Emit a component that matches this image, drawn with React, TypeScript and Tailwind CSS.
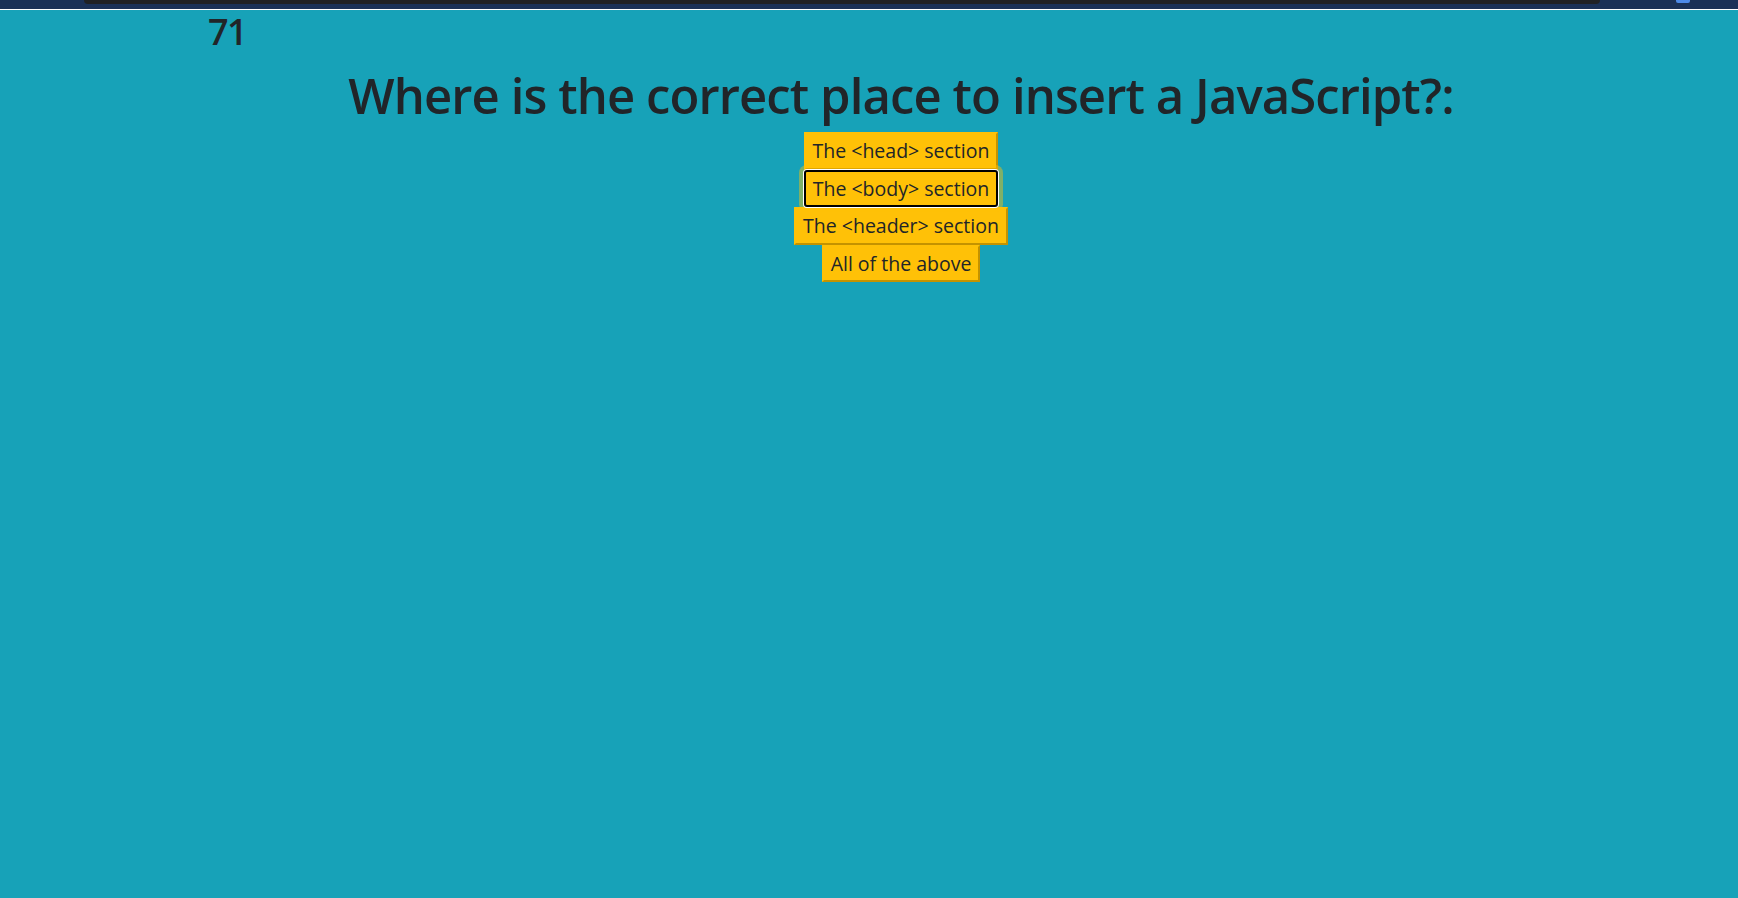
export default function App() {
  const answers = ['The <head> section', 'The <body> section', 'The <header> section', 'All of the above'];
  const focused = 1;

  return (
    <div className="min-h-[898px] w-full bg-[#17a2b8] font-['Open_Sans',sans-serif] text-[#212529]">
      {/* top strip */}
      <div className="relative h-[9px] bg-[#1b3157]">
        <div className="absolute left-[84px] right-[138px] top-0 h-[4px] rounded-b-[6px] bg-[#202124]"></div>
        <div className="absolute left-[1676px] top-0 h-[3px] w-[14px] rounded-b-[2px] bg-[#4d8ae8]"></div>
      </div>
      <div className="h-px bg-white"></div>

      <div className="pl-[208px] text-[36px] font-semibold leading-[44px] tracking-[-1.5px]">71</div>

      <div className="flex flex-col items-center pl-[64px]">
        <h1 className="mt-[10px] text-[49px] font-semibold leading-[62px] tracking-[-0.9px]">
          Where is the correct place to insert a JavaScript?:
        </h1>
        <div className="mt-[6px] flex flex-col items-center">
          {answers.map((a, i) => (
            <button
              key={a}
              className={
                i === focused
                  ? 'relative z-10 rounded-[3px] border-2 border-black bg-[#ffc107] px-[7px] py-[1px] text-[19.5px] leading-[31.5px] shadow-[0_0_0_1px_#fff,0_0_0_5px_rgba(255,193,7,0.45)]'
                  : 'border-2 border-t-[#ffc107] border-l-[#ffc107] border-r-[#c49300] border-b-[#c49300] bg-[#ffc107] px-[7px] py-[1px] text-[19.5px] leading-[31.5px]'
              }
            >
              {a}
            </button>
          ))}
        </div>
      </div>
    </div>
  );
}
